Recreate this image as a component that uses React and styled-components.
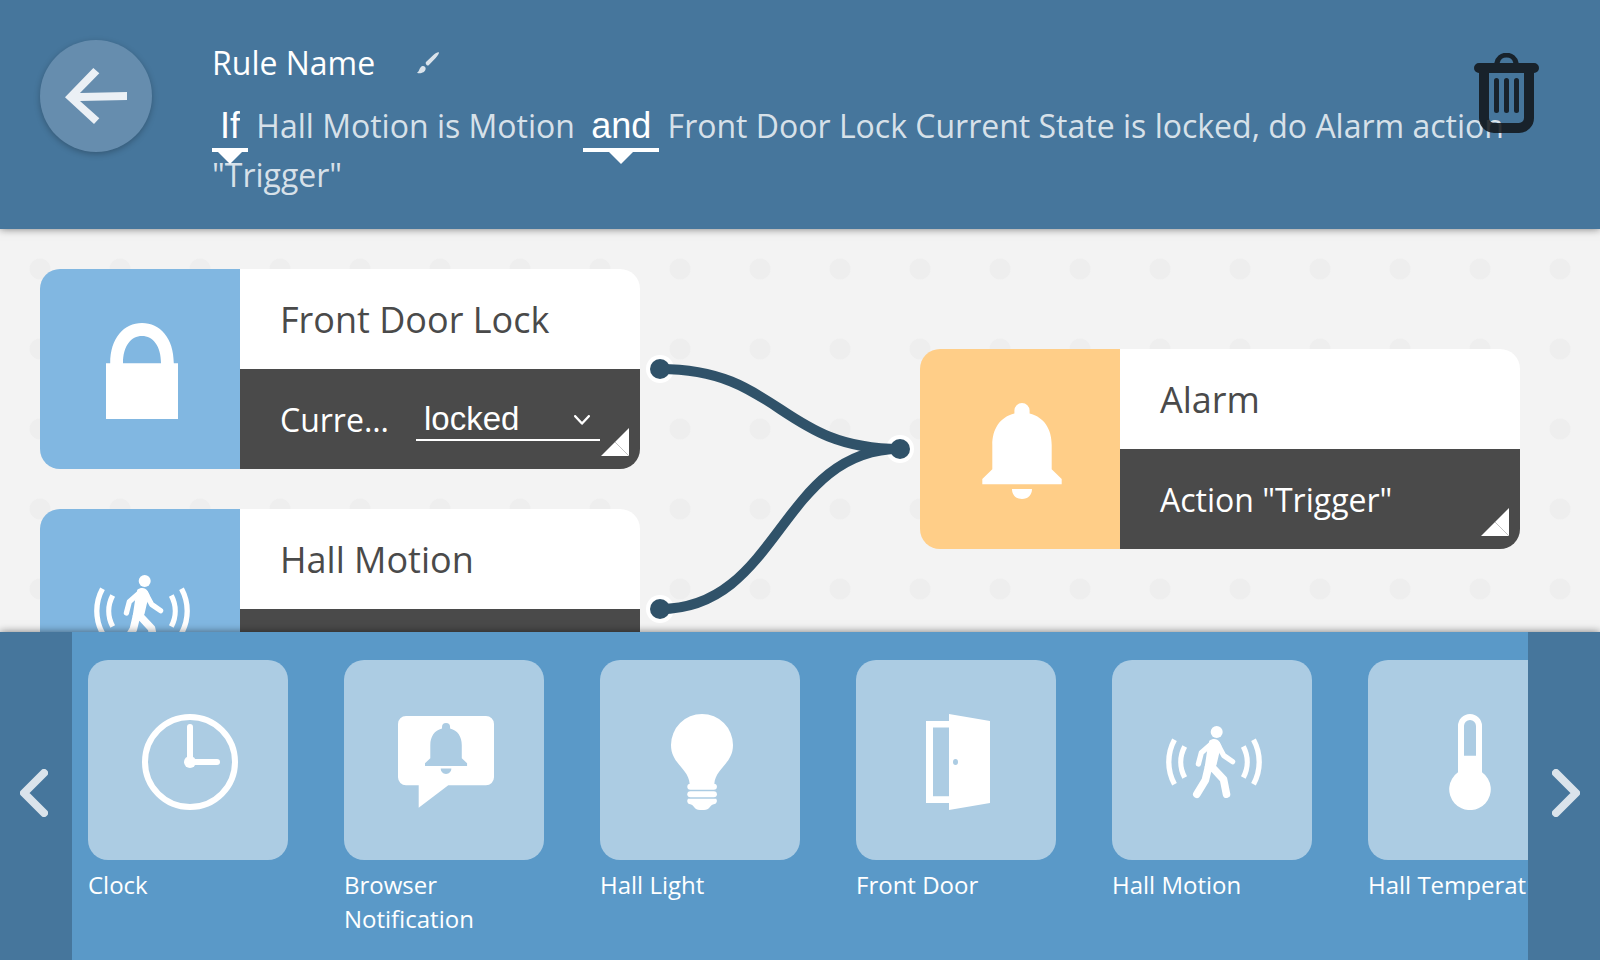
import React from "react";
import styled, { createGlobalStyle } from "styled-components";

const GlobalStyle = createGlobalStyle`
  *, *::before, *::after { box-sizing: border-box; }
  body {
    margin: 0;
    font-family: "Open Sans", "Noto Sans", sans-serif;
    color: #fff;
    background: #f3f3f3;
  }
  button, select { margin: 0; padding: 0; border: 0; background: none; color: inherit; }
  button { cursor: pointer; }
  svg { display: block; }
`;

const Page = styled.div`
  display: flex;
  flex-direction: column;
  height: 100vh;
  overflow: hidden;
`;

const Header = styled.header`
  position: relative;
  z-index: 1;
  display: flex;
  align-items: flex-start;
  gap: 60px;
  padding: 40px 92px 30px 40px;
  background: #46769c;
  box-shadow: 0 0 8px rgba(0, 0, 0, 0.5);
`;

const BackButton = styled.button`
  flex: none;
  width: 112px;
  height: 112px;
  border-radius: 50%;
  background: #668dae;
  box-shadow: 0 2px 6px rgba(0, 0, 0, 0.25);
`;

const RuleInfo = styled.div`
  flex: 1;
  min-width: 0;
  padding-top: 1px;
`;

const NameRow = styled.div`
  display: flex;
  align-items: center;
  gap: 42px;
`;

const RuleName = styled.h1`
  margin: 0;
  font-size: 32px;
  line-height: 44px;
  font-weight: 400;
`;

const EditButton = styled.button`
  width: 22px;
  height: 22px;
  opacity: 0.8;
`;

const RuleText = styled.p`
  margin: 16px 0 0;
  font-size: 32px;
  line-height: 49px;
  color: rgba(255, 255, 255, 0.8);
`;

const WordPicker = styled.span`
  position: relative;
  display: inline-block;
  line-height: 40px;
  margin-bottom: -5px;
  color: #fff;

  &::after {
    content: "";
    position: absolute;
    top: 100%;
    left: 50%;
    margin-left: -12px;
    border: 12px solid transparent;
    border-top-color: #fff;
    border-bottom: 0;
  }
`;

const WordSelect = styled.select`
  appearance: none;
  field-sizing: content;
  height: 48px;
  padding: 0 8px;
  border-bottom: 4px solid #fff;
  border-radius: 0;
  font: 36px/40px "Liberation Sans", Arial, sans-serif;
`;

const DeleteButton = styled.button`
  position: absolute;
  top: 53px;
  right: 61px;
  width: 65px;
  height: 80px;
  color: #101418;
  opacity: 0.85;
`;

const Canvas = styled.main`
  position: relative;
  flex: 1;
  min-height: 0;
  overflow: hidden;
  background: #f3f3f3 radial-gradient(circle, #eee 10px, transparent 11px) 0 0 / 80px 80px;
`;

const Wires = styled.svg`
  position: absolute;
  top: 0;
  left: 0;
  width: 100%;
  height: 100%;
`;

const Card = styled.section`
  position: absolute;
  top: ${(p) => p.$y}px;
  left: ${(p) => p.$x}px;
  display: flex;
  width: 600px;
  height: 200px;
  border-radius: 20px;
  overflow: hidden;
`;

const CardIcon = styled.div`
  flex: none;
  width: 200px;
  padding: 54px 50px 50px 54px;
  background: ${(p) => p.$color};
`;

const CardBody = styled.div`
  flex: 1;
  min-width: 0;
  display: grid;
  grid-template-columns: minmax(0, 1fr);
  grid-template-rows: 1fr 1fr;
`;

const CardTitle = styled.h2`
  margin: 0;
  padding: 2px 40px 0;
  font-size: 36px;
  line-height: 98px;
  font-weight: 400;
  color: #4a4a4a;
  background: #fff;
`;

const CardDetail = styled.div`
  position: relative;
  display: flex;
  align-items: center;
  gap: 24px;
  padding: 2px 40px 0;
  font-size: 32px;
  line-height: 44px;
  background: #4a4a4a;
`;

const PropertyLabel = styled.label`
  flex: 1;
  min-width: 0;
  overflow: hidden;
  text-overflow: ellipsis;
  white-space: nowrap;
`;

const PropertyPicker = styled.span`
  display: grid;
  align-items: center;
  flex: none;
  width: 184px;

  & > * { grid-area: 1 / 1; }
  & > svg { justify-self: end; margin-right: 10px; pointer-events: none; }
`;

const PropertySelect = styled.select`
  appearance: none;
  width: 100%;
  height: 42px;
  padding: 0 8px;
  border-bottom: 2px solid #fff;
  border-radius: 0;
  font: 33px/40px "Liberation Sans", Arial, sans-serif;
`;

const ExpandButton = styled.button`
  position: absolute;
  right: 11px;
  bottom: 13px;
  width: 28px;
  height: 28px;
`;

const Footer = styled.footer`
  position: relative;
  z-index: 1;
  display: flex;
  flex: none;
  height: 328px;
  background: #5a99c8;
  box-shadow: 0 0 8px rgba(0, 0, 0, 0.5);
`;

const ScrollButton = styled.button`
  flex: none;
  display: flex;
  align-items: center;
  justify-content: center;
  width: 72px;
  padding-bottom: 6px;
  padding-left: ${(p) => (p.$next ? 4 : 0)}px;
  padding-right: ${(p) => (p.$next ? 0 : 4)}px;
  color: rgba(255, 255, 255, 0.8);
  background: #46769c;
`;

const DeviceStrip = styled.ul`
  flex: 1;
  min-width: 0;
  display: flex;
  gap: 56px;
  margin: 0;
  padding: 28px 16px;
  overflow: hidden;
  list-style: none;
`;

const Device = styled.li`
  flex: none;
  width: 200px;
`;

const DeviceTile = styled.div`
  height: 200px;
  padding: 54px 50px 50px 54px;
  border-radius: 20px;
  background: #accce3;
`;

const DeviceName = styled.p`
  margin: 8px 0 0;
  font-size: 24px;
  line-height: 34px;
`;

const Icon = ({ children }) => (
  <svg width="96" height="96" viewBox="0 0 96 96" fill="#fff" aria-hidden="true">{children}</svg>
);

const BELL =
  "M40.4 7.6a7.6 7.6 0 0 1 15.2 0V10.5C70 14 77.7 26 77.7 42V66.3L87.7 76V81.3H8.3V76L18.3 66.3V42C18.3 26 26 14 40.4 10.5ZM38 86h20c0 6-4 10-10 10s-10-4-10-10z";

const LockIcon = () => (
  <Icon>
    <path d="M12 40.3H16.2C16.2 15 30 0 48 0S79.8 15 79.8 40.3H84V96H12ZM29 40.3H67C67 23 59 13 48 13S29 23 29 40.3Z" fillRule="evenodd" />
  </Icon>
);

const BellIcon = () => <Icon><path d={BELL} /></Icon>;

const MotionIcon = () => (
  <Icon>
    <circle cx="50.7" cy="18" r="6" />
    <g fill="none" stroke="#fff" strokeLinejoin="round">
      <g strokeWidth="5.3">
        <path d="M8.5 25.8A46 46 0 0 0 8.5 70.2M18.7 32.5A33 33 0 0 0 18.7 63.5" />
        <path d="M87.5 25.8A46 46 0 0 1 87.5 70.2M77.3 32.5A33 33 0 0 1 77.3 63.5" />
      </g>
      <g strokeLinecap="round">
        <path strokeWidth="5.3" d="M47 28.5L35.3 38.8L32.4 50M51.5 30L57.7 41.5L66.6 47.7" />
        <path strokeWidth="7.6" d="M42.5 53L39.3 66.3L30.8 80.2M46 53L57.5 65.3L60.5 80.2" />
      </g>
    </g>
    <path d="M43.3 26.7C46.5 24 51.5 24.2 53.6 28L55.5 32L52.8 41L50.5 51L46.5 58L38.6 53.5L41 37.5Z" />
  </Icon>
);

const ClockIcon = () => (
  <Icon>
    <g fill="none" stroke="#fff" strokeWidth="6" strokeLinecap="round">
      <circle cx="48" cy="48" r="45" />
      <path d="M48 13V48H75" />
    </g>
    <circle cx="48" cy="48" r="6" />
  </Icon>
);

const NotificationIcon = () => (
  <Icon>
    <path d="M8 2H88a8 8 0 0 1 8 8V63.3a8 8 0 0 1-8 8H50.3L20.7 93.8V71.3H8a8 8 0 0 1-8-8V10a8 8 0 0 1 8-8Z" />
    <path d={BELL} fill="#accce3" transform="translate(22.6 9) scale(.53)" />
  </Icon>
);

const LightIcon = () => (
  <Icon>
    <path d="M48 0A31 31 0 0 1 79 31C79 50 61.5 54 60.3 70H35.7C34.5 54 17 50 17 31A31 31 0 0 1 48 0Z" />
    <rect x="33.3" y="69.7" width="29.6" height="6" rx="3" />
    <rect x="33.3" y="77.3" width="29.6" height="6" rx="3" />
    <path d="M34 84.7H62.2C63.8 87 62.5 90 59.7 90.2C55.5 91 56 96 50 96H46C40 96 40.5 91 36.3 90.2C33.6 90 32.4 87 34 84.7Z" />
  </Icon>
);

const DoorIcon = () => (
  <Icon>
    <path
      fillRule="evenodd"
      d="M16 7H39V0L80 7V89L39 96V89H16ZM23 13.5V82.3H39V13.5ZM45.5 45A2.5 3 0 0 0 45.5 51A2.5 3 0 0 0 45.5 45Z"
    />
  </Icon>
);

const ThermometerIcon = () => (
  <Icon>
    <path
      fillRule="evenodd"
      d="M36 12A12 12 0 0 1 60 12V58.3A20.8 20.8 0 1 1 36 58.3ZM42 12V41.7H54V12A6 6 0 0 0 42 12Z"
    />
  </Icon>
);

const Chevron = ({ next }) => (
  <svg width="28" height="48" viewBox="0 0 28 48" fill="none" stroke="currentColor" strokeWidth="8" strokeLinecap="round" strokeLinejoin="round" aria-hidden="true">
    <path d={next ? "M4 4L24 24L4 44" : "M24 4L4 24L24 44"} />
  </svg>
);

const ExpandCorner = () => (
  <ExpandButton aria-label="Expand">
    <svg width="28" height="28" viewBox="0 0 28 28" aria-hidden="true">
      <path d="M28 0V28H0Z" fill="#fff" />
      <path d="M14 14L28 28" stroke="#9a9a9a" strokeWidth=".6" />
    </svg>
  </ExpandButton>
);

const Word = ({ label, options }) => (
  <WordPicker>
    <WordSelect aria-label={label}>
      {options.map((o) => <option key={o}>{o}</option>)}
    </WordSelect>
  </WordPicker>
);

const Property = ({ id, label, options }) => (
  <>
    <PropertyLabel htmlFor={id}>{label}</PropertyLabel>
    <PropertyPicker>
      <PropertySelect id={id}>
        {options.map((o) => <option key={o}>{o}</option>)}
      </PropertySelect>
      <svg width="16" height="10" viewBox="0 0 16 10" fill="none" stroke="#fff" strokeWidth="2.4" strokeLinecap="round" strokeLinejoin="round" aria-hidden="true">
        <path d="M1.2 1.2L8 8.5L14.8 1.2" />
      </svg>
    </PropertyPicker>
  </>
);

const devices = [
  { name: "Clock", Glyph: ClockIcon },
  { name: "Browser Notification", Glyph: NotificationIcon },
  { name: "Hall Light", Glyph: LightIcon },
  { name: "Front Door", Glyph: DoorIcon },
  { name: "Hall Motion", Glyph: MotionIcon },
  { name: "Hall Temperature", Glyph: ThermometerIcon },
];

const ports = [[660, 140], [660, 380], [900, 220]];

export default function App() {
  return (
    <Page>
      <GlobalStyle />
      <Header>
        <BackButton aria-label="Back">
          <svg width="112" height="112" viewBox="0 0 336 336" fill="#fff" fillOpacity=".87" aria-hidden="true">
            <path d="M75 172L160 84L178 100L120 159L261 156V180L120 183L178 235L162 252Z" />
          </svg>
        </BackButton>
        <RuleInfo>
          <NameRow>
            <RuleName>Rule Name</RuleName>
            <EditButton aria-label="Rename rule">
              <svg width="22" height="22" viewBox="0 0 66 66" fill="#fff" aria-hidden="true">
                <path d="M66 1C61 0 56 3 50 8L27 30C24 35 30 43 35 40L56 18C61 12 66 7 66 1Z" />
                <path d="M11 46C15 40 26 41 26 50C25 62 8 66 0 62C6 60 6 52 11 46Z" />
              </svg>
            </EditButton>
          </NameRow>
          <RuleText>
            <Word label="Trigger kind" options={["If", "While"]} /> Hall Motion is Motion{" "}
            <Word label="Join conditions" options={["and", "or"]} /> Front Door Lock Current State is
            locked, do Alarm action "Trigger"
          </RuleText>
        </RuleInfo>
        <DeleteButton aria-label="Delete rule">
          <svg width="65" height="80" viewBox="0 0 195 240" fill="currentColor" aria-hidden="true">
            <path
              fillRule="evenodd"
              d="M15 30H61A37 37 0 0 1 134 30H180A15 15 0 0 1 180 60V195A45 45 0 0 1 135 240H60A45 45 0 0 1 15 195V60A15 15 0 0 1 15 30ZM77 30H118A21 21 0 0 0 77 30ZM45 60V195A15 15 0 0 0 60 210H135A15 15 0 0 0 150 195V60Z"
            />
            <rect x="60" y="75" width="15" height="105" rx="7.5" />
            <rect x="90" y="75" width="15" height="105" rx="7.5" />
            <rect x="120" y="75" width="15" height="105" rx="7.5" />
          </svg>
        </DeleteButton>
      </Header>

      <Canvas>
        <Wires aria-hidden="true">
          {ports.map(([x, y]) => <circle key={y} cx={x} cy={y} r="14" fill="#fff" />)}
          <g fill="none" stroke="#305269" strokeWidth="10">
            <path d="M660 140C780 140 780 220 900 220" />
            <path d="M660 380C780 380 780 220 900 220" />
          </g>
          {ports.map(([x, y]) => <circle key={y} cx={x} cy={y} r="10" fill="#305269" />)}
        </Wires>

        <Card $x={40} $y={40}>
          <CardIcon $color="#81b7e1"><LockIcon /></CardIcon>
          <CardBody>
            <CardTitle>Front Door Lock</CardTitle>
            <CardDetail>
              <Property id="lock-state" label="Current State" options={["locked", "unlocked"]} />
              <ExpandCorner />
            </CardDetail>
          </CardBody>
        </Card>

        <Card $x={40} $y={280}>
          <CardIcon $color="#81b7e1"><MotionIcon /></CardIcon>
          <CardBody>
            <CardTitle>Hall Motion</CardTitle>
            <CardDetail>
              <ExpandCorner />
            </CardDetail>
          </CardBody>
        </Card>

        <Card $x={920} $y={120}>
          <CardIcon $color="#ffce88"><BellIcon /></CardIcon>
          <CardBody>
            <CardTitle>Alarm</CardTitle>
            <CardDetail>
              Action "Trigger"
              <ExpandCorner />
            </CardDetail>
          </CardBody>
        </Card>
      </Canvas>

      <Footer>
        <ScrollButton aria-label="Previous devices"><Chevron /></ScrollButton>
        <DeviceStrip>
          {devices.map(({ name, Glyph }) => (
            <Device key={name}>
              <DeviceTile><Glyph /></DeviceTile>
              <DeviceName>{name}</DeviceName>
            </Device>
          ))}
        </DeviceStrip>
        <ScrollButton $next aria-label="Next devices"><Chevron next /></ScrollButton>
      </Footer>
    </Page>
  );
}
